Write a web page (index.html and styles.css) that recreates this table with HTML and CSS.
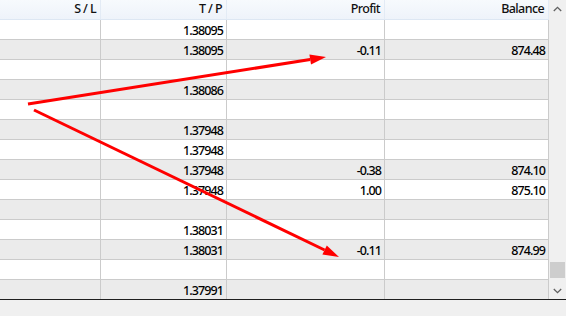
FILE: index.html
```html
<!DOCTYPE html>
<html>
<head>
<meta charset="utf-8">
<link rel="stylesheet" href="styles.css">
</head>
<body>
<div class="window">
  <div class="main">
    <div class="table">
      <div class="row head">
        <div class="cell">S / L</div>
        <div class="cell">T / P</div>
        <div class="cell">Profit</div>
        <div class="cell">Balance</div>
      </div>
      <div class="row"><div class="cell"></div><div class="cell">1.38095</div><div class="cell"></div><div class="cell"></div></div>
      <div class="row alt"><div class="cell"></div><div class="cell">1.38095</div><div class="cell">-0.11</div><div class="cell">874.48</div></div>
      <div class="row"><div class="cell"></div><div class="cell"></div><div class="cell"></div><div class="cell"></div></div>
      <div class="row alt"><div class="cell"></div><div class="cell">1.38086</div><div class="cell"></div><div class="cell"></div></div>
      <div class="row"><div class="cell"></div><div class="cell"></div><div class="cell"></div><div class="cell"></div></div>
      <div class="row alt"><div class="cell"></div><div class="cell">1.37948</div><div class="cell"></div><div class="cell"></div></div>
      <div class="row"><div class="cell"></div><div class="cell">1.37948</div><div class="cell"></div><div class="cell"></div></div>
      <div class="row alt"><div class="cell"></div><div class="cell">1.37948</div><div class="cell">-0.38</div><div class="cell">874.10</div></div>
      <div class="row"><div class="cell"></div><div class="cell">1.37948</div><div class="cell">1.00</div><div class="cell">875.10</div></div>
      <div class="row alt"><div class="cell"></div><div class="cell"></div><div class="cell"></div><div class="cell"></div></div>
      <div class="row"><div class="cell"></div><div class="cell">1.38031</div><div class="cell"></div><div class="cell"></div></div>
      <div class="row alt"><div class="cell"></div><div class="cell">1.38031</div><div class="cell">-0.11</div><div class="cell">874.99</div></div>
      <div class="row"><div class="cell"></div><div class="cell"></div><div class="cell"></div><div class="cell"></div></div>
      <div class="row alt"><div class="cell"></div><div class="cell">1.37991</div><div class="cell"></div><div class="cell"></div></div>
    </div>
    <div class="scrollbar">
      <div class="sb-btn">
        <svg width="9" height="6" viewBox="0 0 9 6"><path d="M0.8 5 L4.5 1.3 L8.2 5" fill="none" stroke="#606060" stroke-width="1.3"/></svg>
      </div>
      <div class="sb-track"><div class="sb-thumb"></div></div>
      <div class="sb-btn">
        <svg width="9" height="6" viewBox="0 0 9 6"><path d="M0.8 1 L4.5 4.7 L8.2 1" fill="none" stroke="#606060" stroke-width="1.3"/></svg>
      </div>
    </div>
    <svg class="arrows" width="566" height="299" viewBox="0 0 566 299">
      <line x1="28" y1="104" x2="310.2" y2="59.5" stroke="#ff0000" stroke-width="3"/>
      <polygon points="326,57 311,64.4 309.4,54.6" fill="#ff0000"/>
      <line x1="34" y1="110" x2="324.6" y2="250" stroke="#ff0000" stroke-width="3"/>
      <polygon points="339,257 322.4,254.6 326.8,245.6" fill="#ff0000"/>
    </svg>
  </div>
  <div class="footer"></div>
</div>
</body>
</html>
```
FILE: styles.css
```css
html, body {
  margin: 0;
  padding: 0;
  background: #f0f0f0;
}
.window {
  width: 566px;
  height: 316px;
  display: flex;
  flex-direction: column;
  font-family: "Noto Sans", "DejaVu Sans", sans-serif;
  font-size: 12.5px;
  font-weight: 500;
  letter-spacing: -0.9px;
  color: #000;
}
.main {
  position: relative;
  height: 299px;
  display: flex;
  background: #fff;
}
.table {
  width: 549px;
  height: 299px;
  overflow: hidden;
  display: flex;
  flex-direction: column;
}
.row {
  display: grid;
  grid-template-columns: 101px 126px 158px 164px;
  height: 20px;
  flex: 0 0 20px;
  box-sizing: border-box;
  border-bottom: 1px solid #cbcbcb;
  background: #fff;
}
.row.alt {
  background: #ebebeb;
}
.cell {
  box-sizing: border-box;
  border-right: 1px solid #cbcbcb;
  text-align: right;
  padding: 2px 3px 0 0;
  line-height: 17px;
  white-space: nowrap;
  overflow: hidden;
}
.row.head {
  background: linear-gradient(#f7fafd, #eef3fa);
  border-bottom: 1px solid #dde7f3;
}
.row.head .cell {
  border-right: 1px solid #e3ebf5;
  padding: 0 4px 0 0;
  line-height: 17px;
  color: #111;
  letter-spacing: -0.6px;
}
.scrollbar {
  width: 17px;
  background: #f0f0f0;
  display: flex;
  flex-direction: column;
}
.sb-btn {
  height: 17px;
  display: flex;
  align-items: center;
  justify-content: center;
}
.sb-track {
  flex: 1;
  display: flex;
  flex-direction: column;
  justify-content: flex-end;
  align-items: center;
}
.sb-thumb {
  width: 15px;
  height: 16px;
  background: #cdcdcd;
  margin-bottom: 4px;
}
.arrows {
  position: absolute;
  left: 0;
  top: 0;
  pointer-events: none;
}
.footer {
  flex: 1;
  border-top: 1px solid #1e1e1e;
  background: #f0f0f0;
}
```
